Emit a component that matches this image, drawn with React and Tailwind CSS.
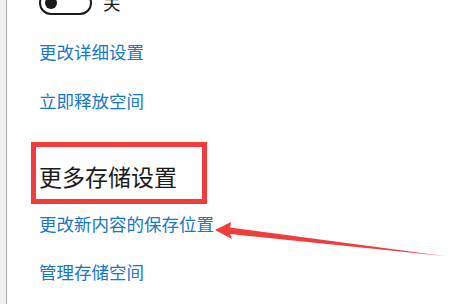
const ArrowMark = () => (
  <svg
    className="pointer-events-none absolute left-0 top-0"
    width="465"
    height="304"
    viewBox="0 0 465 304"
  >
    <path
      d="M215 230 L231 222 L230 227.5 L444 256 L230 234 L232 239 Z"
      fill="#f23b3b"
    />
  </svg>
);

const App = () => {
  return (
    <div
      className="relative flex h-[304px] w-[465px] overflow-hidden bg-white"
      style={{ fontFamily: '"Noto Sans CJK SC", "Noto Sans", sans-serif' }}
    >
      <div className="w-[7px] shrink-0 border-r border-[#a8a8a8] bg-[#f0f0f0]" />
      <div className="flex flex-col pl-[32px]">
        <div className="mt-[-9px] flex h-[24px] items-center">
          <div className="flex h-[24px] w-[53px] items-center rounded-full border-2 border-[#1a1a1a]">
            <div className="ml-[4px] h-[12px] w-[12px] rounded-full bg-[#1a1a1a]" />
          </div>
          <span className="ml-[11px] text-[17.5px] leading-[24px] text-[#1a1a1a]">关</span>
        </div>

        <a className="mt-[24.5px] text-[17.5px] leading-[24px] text-[#1677cc]" href="#">
          更改详细设置
        </a>
        <a className="mt-[25.5px] text-[17.5px] leading-[24px] text-[#1677cc]" href="#">
          立即释放空间
        </a>

        <div className="ml-[-8px] mt-[29px] flex h-[62px] w-[176px] items-center border-[5px] border-[#f43a3a] pl-[3px] pt-[5px]">
          <h2 className="text-[23px] leading-[30px] text-[#1a1a1a]">更多存储设置</h2>
        </div>

        <a className="mt-[8px] text-[17.5px] leading-[24px] text-[#1677cc]" href="#">
          更改新内容的保存位置
        </a>
        <a className="mt-[23.5px] text-[17.5px] leading-[24px] text-[#1677cc]" href="#">
          管理存储空间
        </a>
      </div>
      <ArrowMark />
    </div>
  );
};

export default App;
